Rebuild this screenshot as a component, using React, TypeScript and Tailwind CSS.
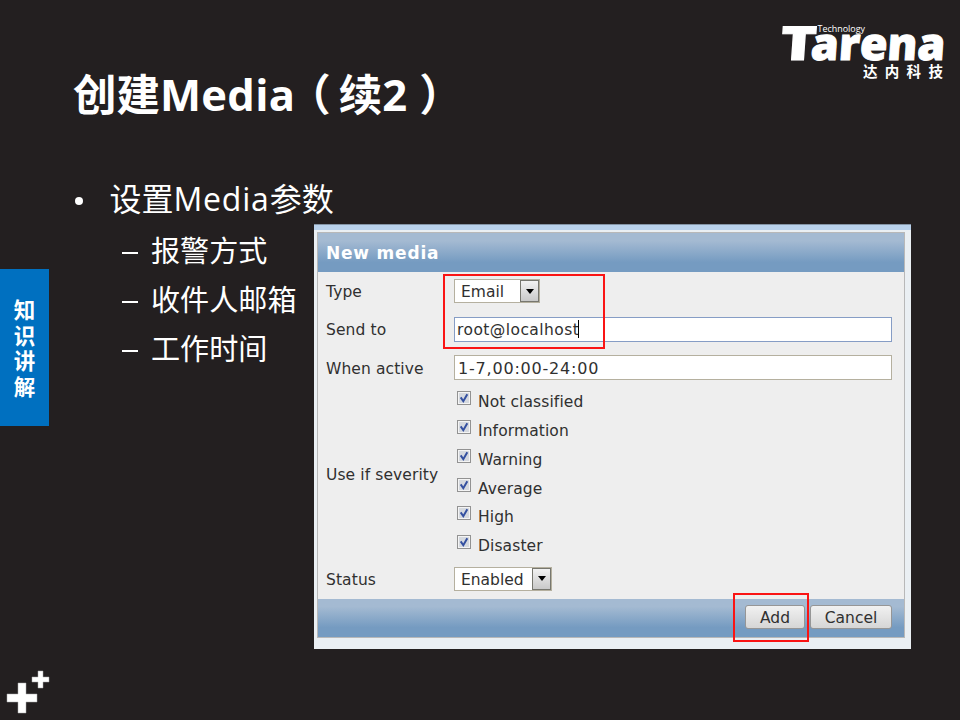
import React from "react";

const latin = "font-['Open_Sans','Noto_Sans_CJK_SC',sans-serif]";

function Logo() {
  return (
    <svg
      className="mt-5 h-[64px] w-[176px] overflow-visible"
      viewBox="774 20 176 64"
      fill="#fff"
      fontFamily="'Open Sans','Noto Sans CJK SC',sans-serif"
    >
      <g transform="translate(0 60.2) skewX(-4)" fontWeight="800" fontSize="47" stroke="#fff" strokeWidth="1">
        <text x="779.5" y="0" textLength="36" lengthAdjust="spacingAndGlyphs">T</text>
        <text x="810" y="0" fontSize="45" textLength="134.5" lengthAdjust="spacingAndGlyphs">arena</text>
      </g>
      <text x="817.5" y="32" fontSize="9.3" fontWeight="400" textLength="47.5" lengthAdjust="spacingAndGlyphs">Technology</text>
      <text x="863" y="77" fontSize="14.5" fontWeight="700" letterSpacing="7.3" fontFamily="'Noto Sans CJK SC',sans-serif">达内科技</text>
    </svg>
  );
}

function SideTab() {
  return (
    <aside className="mt-[99px] flex h-[157px] w-[49px] shrink-0 flex-col items-center bg-[#0070c0] pt-[27px] font-['Noto_Sans_CJK_SC',sans-serif] text-[21.5px] leading-[25.5px] font-bold text-white">
      <span>知</span>
      <span>识</span>
      <span>讲</span>
      <span>解</span>
    </aside>
  );
}

function SubItem({ children }: { children: React.ReactNode }) {
  return (
    <li className="flex h-[49px] items-center text-[29.1px]">
      <span className="mt-[3px] ml-[73px] h-0.5 w-4 shrink-0 bg-white" />
      <span className="ml-[13px]">{children}</span>
    </li>
  );
}

function Outline() {
  return (
    <section className={`w-[265px] shrink-0 whitespace-nowrap text-white ${latin}`}>
      <div className="flex h-[57px] items-center text-[32px]">
        <span className="mt-1 ml-[26px] h-2 w-2 shrink-0 rounded-full bg-white" />
        <span className="mt-px ml-[26.5px]">
          设置<span className="tracking-[0.8px]">Media</span>参数
        </span>
      </div>
      <ul>
        <SubItem>报警方式</SubItem>
        <SubItem>收件人邮箱</SubItem>
        <SubItem>工作时间</SubItem>
      </ul>
    </section>
  );
}

function Select({ value, width }: { value: string; width: string }) {
  return (
    <div className={`flex h-6 items-stretch border border-[#b5b09f] bg-white ${width}`}>
      <span className="flex-1 pl-1.5 leading-[25px]">{value}</span>
      <span className="flex w-[19px] items-center justify-center border border-[#77776f] bg-linear-to-b from-[#f2f2f2] to-[#c9c9c9]">
        <svg className="h-[5px] w-2" viewBox="0 0 8 5">
          <path d="M0 0H8L4 5Z" fill="#000" />
        </svg>
      </span>
    </div>
  );
}

function Severity({ label }: { label: string }) {
  return (
    <div className="flex h-[28.9px] items-start">
      <svg className="mt-[4px] h-[14px] w-[14px]" viewBox="0 0 14 14">
        <rect x="0.5" y="0.5" width="13" height="13" fill="#f4f4f4" stroke="#929292" />
        <rect x="2" y="2" width="10" height="10" fill="#d5d9df" />
        <path d="M3.7 6.4L6.3 10.2L10.3 3.2" fill="none" stroke="#3450a0" strokeWidth="2" />
      </svg>
      <span className="ml-[7px] leading-[30px] tracking-[0.1px]">{label}</span>
    </div>
  );
}

function Row({ label, height, children }: { label: string; height: string; children: React.ReactNode }) {
  return (
    <div className={`flex items-center ${height}`}>
      <span className="mt-1 w-[128px] shrink-0 tracking-[0.1px]">{label}</span>
      {children}
    </div>
  );
}

const button =
  "h-[24px] rounded-[3px] border border-[#969696] bg-linear-to-b from-[#f1f1f1] to-[#d6d6d6] text-center leading-[24px]";

function MediaForm() {
  return (
    <main className="relative mt-[54px] h-[425px] w-[597px] shrink-0 bg-[#eaeff3] font-['DejaVu_Sans',sans-serif] text-[15.5px] whitespace-nowrap text-[#303030]">
      <div className="h-1.5 border-t border-[#8494a5] bg-[#b9d1eb]" />
      <div className="mt-0.5 ml-[3px] h-[406px] w-[588px] border border-[#b8b8b8] bg-[#eee]">
        <h2 className="h-[39px] bg-linear-to-b from-[#a4bad2] from-20% to-[#759bc1] to-75% pl-2 text-[17px] leading-[40px] font-bold tracking-[0.8px] text-white">
          New media
        </h2>
        <div className="h-[327px] pl-2">
          <Row label="Type" height="h-[38px]">
            <Select value="Email" width="w-[86px]" />
          </Row>
          <Row label="Send to" height="h-[38px]">
            <div className="flex h-[25px] w-[438px] items-center border border-[#869dc5] bg-white pl-[2px]">
              <span className="pt-[3px] tracking-[0.43px]">root@localhost</span>
              <span className="-ml-px h-[18px] w-px bg-black" />
            </div>
          </Row>
          <Row label="When active" height="h-[39px]">
            <div className="h-[25px] w-[438px] border border-[#b5b09f] bg-white pl-[3px] text-[16px] leading-[25px] tracking-[0.8px]">
              1-7,00:00-24:00
            </div>
          </Row>
          <Row label="Use if severity" height="h-[173px]">
            <div className="pl-[3px]">
              <Severity label="Not classified" />
              <Severity label="Information" />
              <Severity label="Warning" />
              <Severity label="Average" />
              <Severity label="High" />
              <Severity label="Disaster" />
            </div>
          </Row>
          <Row label="Status" height="h-[37px]">
            <Select value="Enabled" width="w-[98px]" />
          </Row>
        </div>
        <footer className="flex h-[38px] justify-end gap-[5px] bg-linear-to-b from-[#a4bad2] from-20% to-[#759bc1] to-75% pt-1.5 pr-3">
          <div className={`${button} w-[60px]`}>Add</div>
          <div className={`${button} w-[82px]`}>Cancel</div>
        </footer>
      </div>
      <div className="absolute top-[50px] left-[129px] h-[75px] w-[162px] border-2 border-[#fa1414]" />
      <div className="absolute top-[369px] left-[419px] h-[49px] w-[76px] border-2 border-[#fa1414]" />
    </main>
  );
}

export default function App() {
  return (
    <div className="flex h-[720px] w-[960px] flex-col overflow-hidden bg-[#231f20]">
      <header className="flex h-[170px] shrink-0 justify-between pr-[10px] pl-[73px]">
        <h1 className={`mt-[65px] h-[60px] text-[43.5px] leading-[60px] font-bold whitespace-nowrap text-white ${latin}`}>
          创建<span className="tracking-[0.3px]">Media</span>
          <span className="mr-[8px] -ml-[8px]">（</span>续2<span className="ml-[12px]">）</span>
        </h1>
        <Logo />
      </header>
      <div className="flex h-[480px] shrink-0">
        <SideTab />
        <Outline />
        <MediaForm />
      </div>
      <footer className="h-[70px] pt-5">
        <svg className="h-[50px] w-[60px]" viewBox="0 670 60 50">
          <path d="M18 683h8v11h11v8h-11v11h-8v-11h-11v-8h11zM38 671h5v6h6v5h-6v6h-5v-6h-6v-5h6z" fill="#fff" stroke="#aaa" strokeWidth="0.5" />
        </svg>
      </footer>
    </div>
  );
}
